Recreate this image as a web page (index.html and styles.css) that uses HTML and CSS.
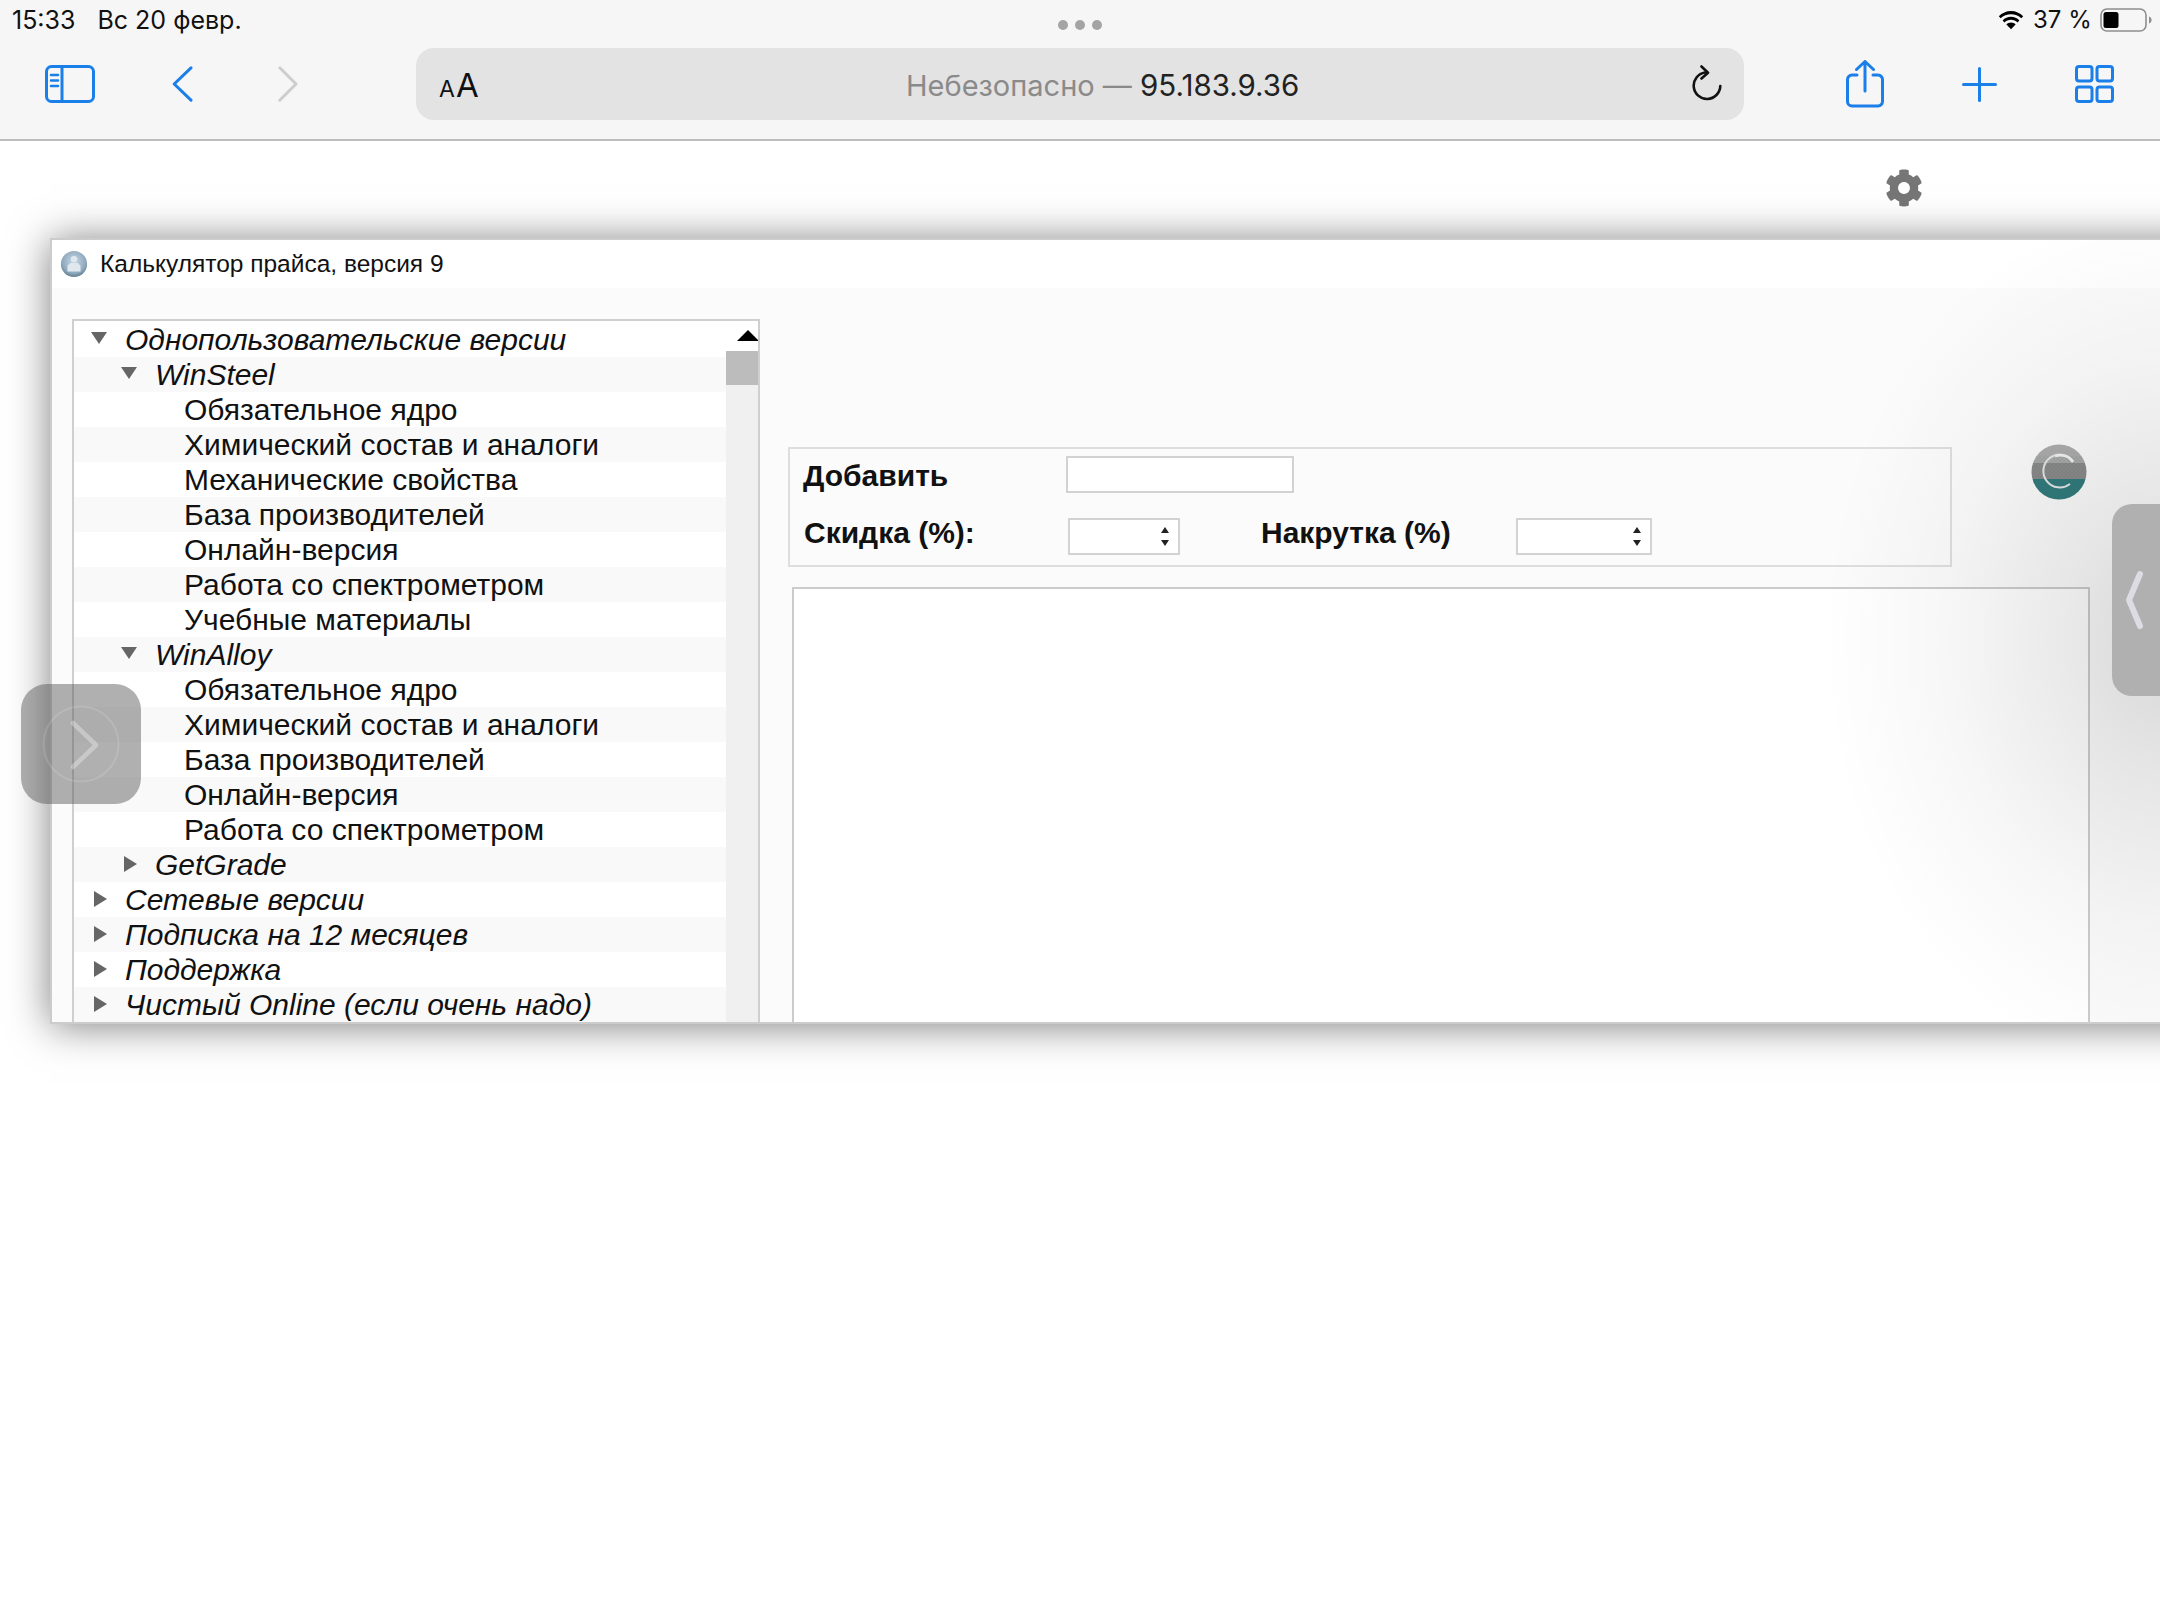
FILE: index.html
```html
<!DOCTYPE html>
<html lang="ru">
<head>
<meta charset="utf-8">
<title>Калькулятор прайса</title>
<link rel="stylesheet" href="styles.css">
</head>
<body>
<header class="chrome">
  <div class="status">
    <span class="clock">15:33</span>
    <span class="date">Вс 20 февр.</span>
    <span class="dots"><i></i><i></i><i></i></span>
    <span class="status-right">
      <svg class="wifi" viewBox="0 0 28 20"><path d="M14 4.2c4 0 7.6 1.5 10.3 4.1l1.9-2C22.9 3 18.7 1 14 1S5.100 3 1.800 6.300l1.900 2C6.400 5.700 10 4.200 14 4.200z"/><path d="M14 9.800c2.500 0 4.800 1 6.500 2.600l1.900-2C20.200 8.200 17.200 6.800 14 6.800s-6.200 1.400-8.400 3.600l1.900 2c1.700-1.600 4-2.600 6.500-2.600z"/><path d="M14 12.600c-1.800 0-3.400.7-4.600 1.800L14 19.200l4.600-4.800c-1.200-1.100-2.800-1.800-4.600-1.800z"/></svg>
      <span class="pct">37 %</span>
      <svg class="battery" viewBox="0 0 52 24"><rect x="1" y="1" width="45" height="22" rx="6" fill="none" stroke="#8e8e8e" stroke-width="1.600"/><rect x="3.500" y="4" width="15" height="16" rx="2.500" fill="#000"/><path d="M49 8.500c1.800.6 2.600 2 2.600 3.500s-.8 2.900-2.600 3.500z" fill="#8e8e8e"/></svg>
    </span>
  </div>
  <div class="toolbar">
    <svg class="tb-icon sidebar" viewBox="0 0 50 38"><rect x="1.500" y="1.500" width="47" height="35" rx="5"/><path d="M17 1.500v35"/><path class="thin" d="M6 10h7M6 15.500h7M6 21h7"/></svg>
    <svg class="tb-icon back" viewBox="0 0 21 36"><path d="M19 1.800 2.200 18 19 34.200"/></svg>
    <svg class="tb-icon forward" viewBox="0 0 20 36"><path d="M1.800 1.800 18 18 1.800 34.200"/></svg>
    <div class="urlbar">
      <span class="aa"><span class="aa-small">A</span><span class="aa-big">A</span></span>
      <span class="url"><span class="url-grey">Небезопасно — </span>95.183.9.36</span>
      <svg class="reload" viewBox="0 0 30 36"><path d="M13 7.500A13.300 13.300 0 1 0 28.300 21"/><path d="M9.500 1.500 16 7.700 9.500 13.500"/></svg>
    </div>
    <svg class="tb-icon share" viewBox="0 0 38 48"><path d="M11 15H6a4.500 4.500 0 0 0-4.500 4.500v22A4.500 4.500 0 0 0 6 46h26a4.500 4.500 0 0 0 4.500-4.500v-22A4.500 4.500 0 0 0 32 15h-5"/><path d="M19 31V2M10.500 9.500 19 1.500l8.500 8"/></svg>
    <svg class="tb-icon plus" viewBox="0 0 35 35"><path d="M17.500 1.500v32M1.500 17.500h32"/></svg>
    <svg class="tb-icon tabs" viewBox="0 0 39 38"><rect x="1.500" y="1.500" width="15.500" height="14.500" rx="2.500"/><rect x="22" y="1.500" width="15.500" height="14.500" rx="2.500"/><rect x="1.500" y="22" width="15.500" height="14.500" rx="2.500"/><rect x="22" y="22" width="15.500" height="14.500" rx="2.500"/></svg>
  </div>
</header>

<main class="page">
  <div class="gear-row">
    <svg class="gear" viewBox="0 0 512 512"><path d="M487.4 315.700l-42.600-24.600c4.300-23.200 4.300-47 0-70.200l42.600-24.600c4.900-2.800 7.100-8.600 5.500-14-11.100-35.600-30-67.800-54.700-94.600-3.800-4.100-10-5.100-14.800-2.300L380.800 110c-17.900-15.400-38.500-27.300-60.800-35.100V25.800c0-5.600-3.900-10.500-9.400-11.700-36.700-8.200-74.300-7.800-109.200 0-5.500 1.200-9.400 6.100-9.400 11.700V75c-22.200 7.900-42.800 19.800-60.800 35.100L88.700 85.500c-4.900-2.800-11-1.900-14.800 2.300-24.700 26.700-43.600 58.900-54.700 94.600-1.700 5.400.6 11.200 5.500 14L67.300 221c-4.300 23.200-4.300 47 0 70.200l-42.600 24.600c-4.900 2.800-7.100 8.600-5.500 14 11.100 35.600 30 67.800 54.700 94.600 3.800 4.100 10 5.100 14.800 2.300l42.600-24.600c17.900 15.400 38.500 27.300 60.800 35.100v49.200c0 5.600 3.900 10.500 9.400 11.700 36.700 8.200 74.300 7.800 109.200 0 5.500-1.200 9.400-6.100 9.400-11.700v-49.200c22.200-7.900 42.800-19.800 60.800-35.100l42.600 24.600c4.900 2.800 11 1.900 14.800-2.300 24.700-26.700 43.600-58.900 54.700-94.600 1.500-5.500-.7-11.300-5.600-14.100zM256 336c-44.100 0-80-35.900-80-80s35.900-80 80-80 80 35.900 80 80-35.900 80-80 80z"/></svg>
  </div>

  <section class="window">
    <div class="titlebar">
      <svg class="app-icon" viewBox="0 0 30 30">
        <defs><radialGradient id="appg" cx=".5" cy=".4" r=".6"><stop offset="0" stop-color="#c9d8e6"/><stop offset=".75" stop-color="#8fa9bd"/><stop offset="1" stop-color="#5f7f8c"/></radialGradient></defs>
        <circle cx="15" cy="15" r="14" fill="url(#appg)"/>
        <path d="M8 23v-6l3-3h8l3 3v6z" fill="#dfe8ef"/><circle cx="15" cy="10" r="3.500" fill="#dfe8ef"/>
      </svg>
      <span class="title-text">Калькулятор прайса, версия 9</span>
    </div>
    <div class="win-body">
      <div class="tree">
        <ul class="rows">
          <li class="row l1"><span class="tri down"></span><em>Однопользовательские версии</em></li>
          <li class="row l2"><span class="tri down"></span><em>WinSteel</em></li>
          <li class="row l3">Обязательное ядро</li>
          <li class="row l3">Химический состав и аналоги</li>
          <li class="row l3">Механические свойства</li>
          <li class="row l3">База производителей</li>
          <li class="row l3">Онлайн-версия</li>
          <li class="row l3">Работа со спектрометром</li>
          <li class="row l3">Учебные материалы</li>
          <li class="row l2"><span class="tri down"></span><em>WinAlloy</em></li>
          <li class="row l3">Обязательное ядро</li>
          <li class="row l3">Химический состав и аналоги</li>
          <li class="row l3">База производителей</li>
          <li class="row l3">Онлайн-версия</li>
          <li class="row l3">Работа со спектрометром</li>
          <li class="row l2"><span class="tri right"></span><em>GetGrade</em></li>
          <li class="row l1"><span class="tri right"></span><em>Сетевые версии</em></li>
          <li class="row l1"><span class="tri right"></span><em>Подписка на 12 месяцев</em></li>
          <li class="row l1"><span class="tri right"></span><em>Поддержка</em></li>
          <li class="row l1"><span class="tri right"></span><em>Чистый Online (если очень надо)</em></li>
        </ul>
        <div class="scrollbar">
          <div class="scroll-up"><span class="scroll-arrow"></span></div>
          <div class="scroll-thumb"></div>
        </div>
      </div>
      <div class="content">
        <div class="top-row">
          <div class="group">
            <div class="form-row">
              <label class="lbl lbl-add">Добавить</label>
              <span class="field field-add"></span>
            </div>
            <div class="form-row">
              <label class="lbl lbl-disc">Скидка (%):</label>
              <span class="field spin spin-a"><span class="spin-arrows"><i class="up"></i><i class="dn"></i></span></span>
              <label class="lbl lbl-mark">Накрутка (%)</label>
              <span class="field spin spin-b"><span class="spin-arrows"><i class="up"></i><i class="dn"></i></span></span>
            </div>
          </div>
          <svg class="logo" viewBox="0 0 56 56">
            <defs>
              <clipPath id="lc"><circle cx="28" cy="28" r="27.500"/></clipPath>
              <pattern id="dith" width="4" height="4" patternUnits="userSpaceOnUse"><circle cx="1" cy="1" r=".7" fill="#5e6b6e" opacity=".4"/><circle cx="3" cy="3" r=".7" fill="#5e6b6e" opacity=".4"/></pattern>
            </defs>
            <g clip-path="url(#lc)">
              <rect width="56" height="19" fill="#acacac"/>
              <rect y="19" width="56" height="16" fill="#8c8c8c"/>
              <rect y="35" width="56" height="21" fill="#2e7c7e"/>
              <rect y="12" width="56" height="44" fill="url(#dith)"/>
            </g>
            <path d="M42 17A16.500 16.500 0 1 0 39 40" fill="none" stroke="#e2e6e6" stroke-width="2"/>
            <path d="M24 12c7-2 14 0 18 6" fill="none" stroke="#f2f2f2" stroke-width="2.500"/>
          </svg>
        </div>
        <div class="bigbox"></div>
      </div>
    </div>
    <div class="vignette"></div>
  </section>

  <div class="handle handle-left">
    <svg viewBox="0 0 120 120"><circle cx="60" cy="60" r="37.500" fill="none" stroke="rgba(255,255,255,.13)" stroke-width="2"/><path d="M52 39 75 61 52 83" fill="none" stroke="rgba(255,255,255,.32)" stroke-width="4.500" stroke-linecap="round" stroke-linejoin="round"/></svg>
  </div>
  <div class="handle handle-right">
    <svg viewBox="0 0 22 60"><path d="M17 4 6 30 17 56" fill="none" stroke="#dcdce2" stroke-width="6" stroke-linecap="round" stroke-linejoin="round"/></svg>
  </div>
</main>
</body>
</html>
```

FILE: styles.css
```css
* { box-sizing: border-box; }
html, body { margin: 0; padding: 0; }
body {
  width: 2160px;
  height: 1620px;
  overflow: hidden;
  background: #fff;
  font-family: "Liberation Sans", Arial, sans-serif;
  color: #000;
}

/* Browser chrome */
.chrome {
  height: 141px;
  background: #f6f6f6;
  border-bottom: 2px solid #bdbdbd;
}
.status {
  position: relative;
  height: 48px;
  padding: 5px 0 0 12px;
  display: flex;
  font-family: Inter, "Liberation Sans", sans-serif;
  font-size: 25px;
  line-height: 30px;
  color: #111;
}
.date { margin-left: 22px; }
.dots {
  position: absolute;
  left: 1058px;
  top: 20px;
  display: flex;
  gap: 7px;
}
.dots i { width: 10px; height: 10px; border-radius: 50%; background: #a4a4a4; }
.status-right {
  position: absolute;
  left: 1997px;
  top: 8px;
  display: flex;
  align-items: center;
}
.wifi { width: 28px; height: 20px; fill: #000; }
.pct { margin-left: 8px; font-size: 24px; line-height: 24px; }
.battery { width: 52px; height: 24px; margin-left: 8px; }

.toolbar {
  position: relative;
  height: 91px;
  display: flex;
  align-items: center;
  padding-bottom: 19px;
}
.tb-icon { fill: none; stroke: #1a7fe8; stroke-width: 3; stroke-linecap: round; stroke-linejoin: round; flex: none; }
.tb-icon .thin { stroke-width: 2.500; }
.sidebar { width: 50px; height: 38px; margin-left: 45px; }
.back { width: 21px; height: 36px; margin-left: 77px; }
.forward { width: 20px; height: 36px; margin-left: 85px; stroke: #cdcdcd; }
.urlbar {
  width: 1328px;
  height: 72px;
  margin-left: 118px;
  background: #e3e3e3;
  border-radius: 18px;
  display: flex;
  align-items: center;
  position: relative;
  flex: none;
}
.aa {
  margin: 5px 0 0 23px;
  display: flex;
  align-items: baseline;
  font-family: Inter, "Liberation Sans", sans-serif;
  color: #111;
  line-height: 30px;
}
.aa-small { font-size: 23px; }
.aa-big { font-size: 33px; margin-left: 1px; }
.url {
  position: absolute;
  left: 490px;
  top: 1px;
  line-height: 72px;
  font-family: Inter, "Liberation Sans", sans-serif;
  font-size: 29.500px;
  color: #222;
  white-space: nowrap;
}
.url-grey { color: #8a8a8a; font-size: 29px; }
.reload {
  position: absolute;
  left: 1276px;
  top: 17px;
  width: 30px;
  height: 36px;
  fill: none;
  stroke: #111;
  stroke-width: 2.600;
  stroke-linecap: round;
  stroke-linejoin: round;
}
.share { width: 38px; height: 48px; margin-left: 102px; }
.plus { width: 35px; height: 35px; margin-left: 78px; }
.tabs { width: 39px; height: 38px; margin-left: 78px; }

/* Page */
.page { position: relative; height: 1479px; }
.gear-row {
  height: 97px;
  padding: 27px 237px 0 0;
  display: flex;
  justify-content: flex-end;
  align-items: flex-start;
}
.gear { width: 38px; height: 40px; fill: #767676; }

.window {
  position: relative;
  width: 2200px;
  height: 786px;
  margin-left: 50px;
  border: 2px solid #cccccc;
  background: #fbfbfb;
  overflow: hidden;
  box-shadow: 0 2px 38px rgba(0, 0, 0, .5);
  display: flex;
  flex-direction: column;
}
.titlebar {
  flex: none;
  height: 48px;
  background: #fff;
  display: flex;
  align-items: center;
  padding-left: 8px;
}
.app-icon { width: 28px; height: 30px; }
.title-text { margin-left: 12px; font-size: 24.500px; line-height: 30px; color: #111; }
.win-body { flex: 1; display: flex; min-height: 0; }

/* Tree */
.tree {
  flex: none;
  width: 688px;
  margin: 31px 0 0 20px;
  border: 2px solid #cfcfcf;
  border-bottom: 0;
  background: #fff;
  display: flex;
  padding-top: 1px;
  overflow: hidden;
}
.rows { list-style: none; margin: 0; padding: 0; width: 652px; flex: none; }
.row {
  height: 35px;
  display: flex;
  align-items: center;
  font-size: 30px;
  line-height: 35px;
  white-space: nowrap;
  color: #111;
}
.row:nth-child(even) { background: #f9f9f9; }
.row em { font-style: italic; }
.l1 { padding-left: 17px; }
.l2 { padding-left: 47px; }
.l3 { padding-left: 110px; }
.tri { flex: none; display: block; width: 0; height: 0; }
.tri.down {
  border-left: 8.500px solid transparent;
  border-right: 8.500px solid transparent;
  border-top: 12px solid #666;
  margin: -3px 18px 0 0;
}
.l1 .tri.right, .l2 .tri.right {
  border-top: 8px solid transparent;
  border-bottom: 8px solid transparent;
  border-left: 13px solid #666;
  margin: -1px 18px 0 3px;
}
.scrollbar { flex: none; width: 33px; background: #f0f0f0; }
.scroll-up { height: 29px; background: #fff; display: flex; justify-content: flex-end; padding-top: 8px; }
.scroll-arrow {
  width: 0; height: 0;
  border-left: 11px solid transparent;
  border-right: 11px solid transparent;
  border-bottom: 11px solid #000;
}
.scroll-thumb { height: 34px; background: #bcbcbc; }

/* Right side */
.content { flex: 1; display: flex; flex-direction: column; margin-left: 28px; padding-top: 159px; min-width: 0; }
.top-row { display: flex; align-items: flex-start; flex: none; }
.group {
  width: 1164px;
  height: 120px;
  border: 2px solid #dedede;
  padding: 7px 0 0 13px;
  flex: none;
}
.form-row { display: flex; align-items: center; height: 37px; margin-bottom: 25px; }
.lbl { font-size: 30px; font-weight: 700; line-height: 37px; color: #111; flex: none; position: relative; }
.lbl-add { width: 263px; top: 1px; }
.lbl-disc { width: 264px; margin-left: 1px; top: -4px; }
.lbl-mark { width: 255px; margin-left: 80px; padding-left: 0; top: -4px; }
.field { display: block; height: 37px; background: #fff; border: 2px solid #d2d2d2; flex: none; position: relative; }
.field-add { width: 228px; }
.spin-a { width: 112px; margin-right: 1px; }
.spin-b { width: 136px; }
.spin-arrows {
  position: absolute;
  right: 9px;
  top: 7px;
  display: flex;
  flex-direction: column;
  gap: 7px;
}
.spin-arrows i { display: block; width: 0; height: 0; border-left: 4.500px solid transparent; border-right: 4.500px solid transparent; }
.spin-arrows .up { border-bottom: 6px solid #222; }
.spin-arrows .dn { border-top: 6px solid #222; }
.logo { width: 56px; height: 56px; margin: -3px 0 0 79px; flex: none; }
.bigbox {
  flex: 1;
  width: 1298px;
  margin: 20px 0 0 4px;
  background: #fff;
  border: 2px solid #cccccc;
  border-bottom: 0;
}
.vignette {
  position: absolute;
  inset: 0;
  pointer-events: none;
  background: radial-gradient(ellipse 350px 440px at 2120px 400px, rgba(0, 0, 0, .145), rgba(0, 0, 0, .085) 30%, rgba(0, 0, 0, .03) 65%, rgba(0, 0, 0, 0));
}

/* Floating handles */
.handle { position: absolute; display: flex; align-items: center; justify-content: center; }
.handle-left {
  left: 21px;
  top: 543px;
  width: 120px;
  height: 120px;
  border-radius: 26px;
  background: rgba(80, 80, 80, .45);
}
.handle-left svg { width: 120px; height: 120px; }
.handle-right {
  left: 2112px;
  top: 363px;
  width: 48px;
  height: 192px;
  border-radius: 20px 0 0 20px;
  background: #b0b0b0;
}
.handle-right svg { width: 22px; height: 60px; margin-right: 4px; }
```
